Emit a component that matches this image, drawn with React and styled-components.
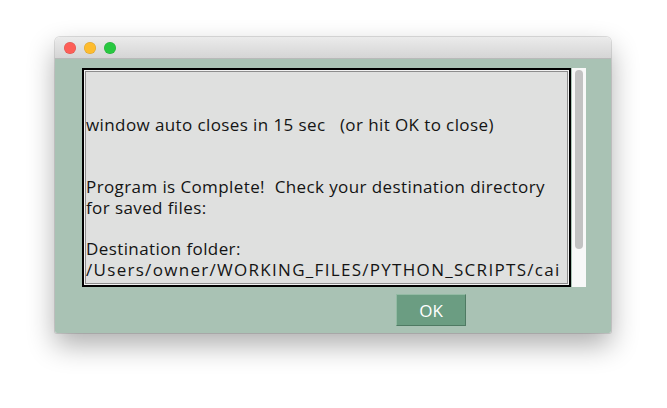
import React from "react";
import styled, { createGlobalStyle } from "styled-components";

const Global = createGlobalStyle`
    html, body {
        margin: 0;
        padding: 0;
        background: #ffffff;
        font-family: "Open Sans", Lato, sans-serif;
    }
`

const Page = styled.div`
    width: 667px;
    height: 408px;
    padding: 37px 0 0 55px;
    box-sizing: border-box;
`

const Window = styled.div`
    width: 556px;
    height: 296px;
    border-radius: 5px 5px 2px 2px;
    display: flex;
    flex-direction: column;
    box-shadow: 0 12px 28px rgba(0, 0, 0, 0.32), 0 0 0 1px rgba(0, 0, 0, 0.12);
    overflow: hidden;
`

const TitleBar = styled.div`
    height: 22px;
    flex: none;
    display: flex;
    align-items: center;
    gap: 8px;
    padding-left: 9px;
    background: linear-gradient(#ebebeb, #d5d5d5);
    border-bottom: 1px solid #b9b9b9;
    box-sizing: border-box;
`

const Light = styled.span`
    width: 12px;
    height: 12px;
    border-radius: 50%;
    background: ${p => p.color};
    box-shadow: inset 0 0 0 0.5px rgba(0, 0, 0, 0.15);
`

const Body = styled.div`
    flex: 1;
    background: #a9c2b4;
    padding: 9px 0 7px 27px;
    display: flex;
    flex-direction: column;
    gap: 7px;
`

const OutputRow = styled.div`
    display: flex;
    height: 219px;
    gap: 1px;
`

const TextBox = styled.div`
    width: 489px;
    box-sizing: border-box;
    border: 2px solid #000;
    background: #dfe0df;
    box-shadow: inset 0 0 0 1px #f2f2f2, inset 0 0 0 2px #8d8d8d;
    padding: 3px 0 0 2px;
    overflow: hidden;
    white-space: pre;
    font-size: 17px;
    letter-spacing: 0.4px;
    line-height: 20.8px;
    color: #141414;
`

const Path = styled.span`
    letter-spacing: ${p => p.spacing}px;
`

const ScrollTrack = styled.div`
    width: 14px;
    background: #f8f8f8;
    padding: 2px 3px 0 3px;
    box-sizing: border-box;
`

const Thumb = styled.div`
    height: 179px;
    border-radius: 4px;
    background: #c2c2c2;
`

const ButtonRow = styled.div`
    display: flex;
    padding-left: 314px;
`

const OkButton = styled.button`
    width: 70px;
    height: 32px;
    background: #6b9d82;
    color: #fff;
    font-family: "Open Sans", Lato, sans-serif;
    font-size: 17px;
    border: 1px solid;
    border-color: #93bba4 #4f7a63 #4f7a63 #93bba4;
    padding: 0;
`

const message = `

window auto closes in 15 sec   (or hit OK to close)


Program is Complete!  Check your destination directory
for saved files:

Destination folder:
`

export default function App() {
    return (
        <Page>
            <Global />
            <Window>
                <TitleBar>
                    <Light color="#fd5e57" />
                    <Light color="#febc2e" />
                    <Light color="#28c840" />
                </TitleBar>
                <Body>
                    <OutputRow>
                        <TextBox>
                            {message}
                            <Path spacing={1.3}>/Users/owner/WORKING_FILES/PYTHON_SCRIPTS/cai</Path>
                        </TextBox>
                        <ScrollTrack>
                            <Thumb />
                        </ScrollTrack>
                    </OutputRow>
                    <ButtonRow>
                        <OkButton>OK</OkButton>
                    </ButtonRow>
                </Body>
            </Window>
        </Page>
    )
}
